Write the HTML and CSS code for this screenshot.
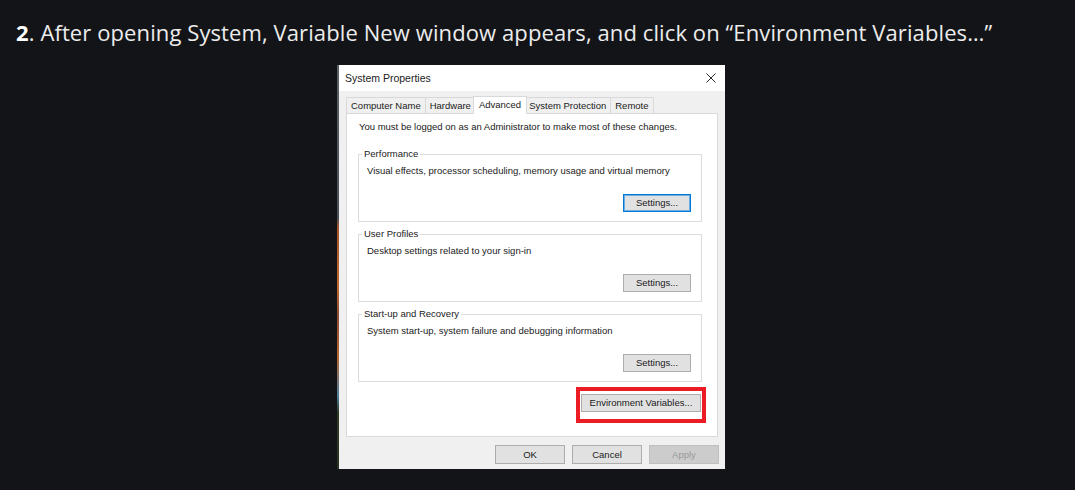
FILE: index.html
```html
<!DOCTYPE html>
<html lang="en">
<head>
<meta charset="utf-8">
<title>Environment Variables step</title>
<link rel="stylesheet" href="styles.css">
</head>
<body>
<h2 class="step"><b>2</b>. After opening System, Variable New window appears, and click on “Environment Variables…”</h2>
<div class="shot">
  <div class="strip"></div>
  <div class="dialog">
    <div class="titlebar">
      <span class="title">System Properties</span>
      <svg class="close" width="10" height="10" viewBox="0 0 10 10"><path d="M0.5 0.5 L9.5 9.5 M9.5 0.5 L0.5 9.5" stroke="#2b2b2b" stroke-width="1" fill="none"/></svg>
    </div>
    <div class="dlg-body">
      <div class="tabs">
        <div class="tab">Computer Name</div>
        <div class="tab">Hardware</div>
        <div class="tab active">Advanced</div>
        <div class="tab">System Protection</div>
        <div class="tab">Remote</div>
      </div>
      <div class="panel">
        <p class="note">You must be logged on as an Administrator to make most of these changes.</p>
        <fieldset class="group">
          <legend>Performance</legend>
          <p class="desc">Visual effects, processor scheduling, memory usage and virtual memory</p>
          <div class="btn-row"><button class="btn focused">Settings...</button></div>
        </fieldset>
        <fieldset class="group">
          <legend>User Profiles</legend>
          <p class="desc">Desktop settings related to your sign-in</p>
          <div class="btn-row"><button class="btn">Settings...</button></div>
        </fieldset>
        <fieldset class="group">
          <legend>Start-up and Recovery</legend>
          <p class="desc">System start-up, system failure and debugging information</p>
          <div class="btn-row"><button class="btn">Settings...</button></div>
        </fieldset>
        <div class="env-row">
          <span class="highlight"><button class="btn env">Environment Variables...</button></span>
        </div>
      </div>
      <div class="footer">
        <button class="btn foot">OK</button>
        <button class="btn foot">Cancel</button>
        <button class="btn foot disabled">Apply</button>
      </div>
    </div>
  </div>
</div>
</body>
</html>
```
FILE: styles.css
```css
* { box-sizing: border-box; }

body {
  margin: 0;
  background: #131418;
  width: 1075px;
  height: 490px;
  overflow: hidden;
}

.step {
  margin: 0;
  padding: 17px 16px 0;
  font-family: "Open Sans", "Noto Sans", sans-serif;
  font-size: 22px;
  line-height: 30px;
  font-weight: 500;
  letter-spacing: 0.1px;
  color: #ececec;
  white-space: nowrap;
}
.step b { font-weight: 700; color: #ffffff; }

.shot {
  display: flex;
  margin: 18px 0 0 337px;
  height: 404px;
}

.strip {
  width: 2px;
  background: linear-gradient(to bottom,
    #5a6066 0%, #4a5058 38%, #a4522a 40%, #c2682c 55%,
    #8a4a34 62%, #b8642e 72%, #4d7c9c 82%, #2c3a24 86%, #2a3320 100%);
}

.dialog {
  width: 386px;
  display: flex;
  flex-direction: column;
  font-family: "Liberation Sans", Arial, sans-serif;
  font-size: 9.5px;
  color: #1a1a1a;
}

.titlebar {
  height: 26px;
  background: #ffffff;
  display: flex;
  align-items: center;
  justify-content: space-between;
  padding: 0 9px 0 6px;
}
.title { font-size: 10.5px; color: #222; }

.dlg-body {
  flex: 1;
  background: #f0f0f0;
  padding: 5px 6px 0 7px;
  display: flex;
  flex-direction: column;
}

.tabs {
  display: flex;
  align-items: flex-end;
  padding-left: 1px;
}
.tab {
  height: 16px;
  line-height: 15px;
  padding: 0 4px;
  border: 1px solid #d9d9d9;
  border-bottom: none;
  margin-left: -1px;
  background: #f0f0f0;
  white-space: nowrap;
}
.tab.active {
  height: 18px;
  margin: 0 -2px -1px -3px;
  padding: 0 5px;
  line-height: 16px;
  background: #ffffff;
  position: relative;
  z-index: 1;
}

.panel {
  width: 372px;
  height: 324px;
  background: #ffffff;
  border: 1px solid #d9d9d9;
  display: flex;
  flex-direction: column;
}

.note {
  margin: 7px 0 0 12px;
  line-height: 12px;
}

.group {
  margin: 15px 15px 0 11px;
  padding: 0 10px 9px 8px;
  border: 1px solid #dcdcdc;
  min-width: 0;
}
.group + .group { margin-top: 6px; }
.group legend {
  margin-left: -5px;
  padding: 0 2px;
  line-height: 12px;
}
.desc {
  margin: 5px 0 0;
  line-height: 12px;
}
.btn-row {
  display: flex;
  justify-content: flex-end;
  margin-top: 17px;
}

.btn {
  font-family: "Liberation Sans", Arial, sans-serif;
  font-size: 9.5px;
  color: #1a1a1a;
  background: #e1e1e1;
  border: 1px solid #adadad;
  border-radius: 0;
  height: 18px;
  width: 68px;
  padding: 0;
  line-height: 16px;
}
.btn.focused {
  border: 1px solid #0078d7;
  box-shadow: inset 0 0 0 1px #6aaee6;
}

.env-row {
  display: flex;
  justify-content: flex-end;
  margin: 12px 16px 0 0;
}
.highlight {
  position: relative;
  display: flex;
}
.highlight::after {
  content: "";
  position: absolute;
  left: -5px;
  right: -5px;
  top: -7px;
  bottom: -11px;
  border: 4px solid #ec1c24;
}
.btn.env { width: 120px; }

.footer {
  display: flex;
  justify-content: flex-end;
  gap: 7px;
  margin-top: 8px;
}
.btn.foot {
  width: 70px;
  height: 19px;
  line-height: 17px;
}
.btn.disabled {
  background: #cccccc;
  border-color: #bfbfbf;
  color: #9a9a9a;
}
```
